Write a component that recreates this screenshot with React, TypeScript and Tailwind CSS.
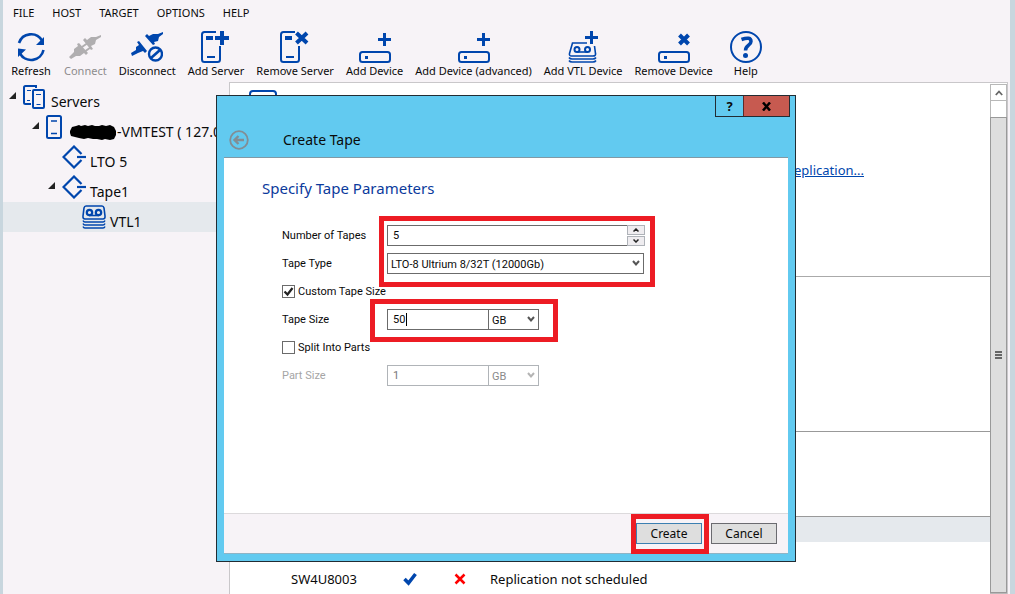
import type { ReactNode } from "react";

const BLUE = "#0046ad";

function ServerGlyph() {
  return (
    <>
      <path d="M16 1H4.500Q2 1 2 3.500V28.500Q2 31 4.500 31H17.500Q20 31 20 28.500V15" strokeWidth="2" />
      <path d="M6 7h7" strokeWidth="4" />
      <path d="M7 26h8" strokeWidth="2" />
    </>
  );
}

function DeviceGlyph() {
  return (
    <>
      <rect x="1" y="21" width="30" height="10" rx="2.500" strokeWidth="2" />
      <path d="M6 26.500h3" strokeWidth="3" />
    </>
  );
}

function Icon({ children, color = BLUE }: { children: ReactNode; color?: string }) {
  return (
    <svg width="32" height="32" viewBox="0 0 32 32" fill="none" stroke={color} aria-hidden="true">
      {children}
    </svg>
  );
}

const tools: { label: string; disabled?: boolean; icon: ReactNode }[] = [
  {
    label: "Refresh",
    icon: (
      <Icon>
        <path d="M4 12A12.700 12.700 0 0 1 27 9.500M28.500 19A12.700 12.700 0 0 1 5 22.500" strokeWidth="2.600" />
        <path d="M29 6v8h-8zM3 26v-8.500l8 1z" fill={BLUE} stroke="none" />
      </Icon>
    ),
  },
  {
    label: "Connect",
    disabled: true,
    icon: (
      <Icon color="#b0aeb0">
        <path
          d="M0 26L5 21V18L9 15 8 13 10 12 19 22 17 24 15 22 11 25H7L2 28zM32 4V6L27 9 26 13 22 15 24 18 22 19 14 9 16 7 18 9 22 6H27z"
          fill="#b0aeb0"
          stroke="none"
        />
        <path d="M13 16l5-3.500M16.500 20l5-3.500" strokeWidth="2" />
      </Icon>
    ),
  },
  {
    label: "Disconnect",
    icon: (
      <Icon>
        <path
          d="M0 22L5 19V16L8 14 6 11 8 10 16 20 14 22 12 20 7 22 1 25zM32 1V3L28 6 27 10 23 11 24 13 22 14 14 5 16 3 18 5 22 3H27z"
          fill={BLUE}
          stroke="none"
        />
        <circle cx="24.500" cy="23" r="6.500" strokeWidth="2.400" />
        <path d="M20 27l9-8" strokeWidth="2.600" />
      </Icon>
    ),
  },
  {
    label: "Add Server",
    icon: (
      <Icon>
        <ServerGlyph />
        <path d="M15 7h14M22 0v14" strokeWidth="4" />
      </Icon>
    ),
  },
  {
    label: "Remove Server",
    icon: (
      <Icon>
        <ServerGlyph />
        <path d="M17.500 2L28 12M28 2L17.500 12" strokeWidth="4" />
      </Icon>
    ),
  },
  {
    label: "Add Device",
    icon: (
      <Icon>
        <DeviceGlyph />
        <path d="M19 8.500h13M25.500 2v13" strokeWidth="3" />
      </Icon>
    ),
  },
  {
    label: "Add Device (advanced)",
    icon: (
      <Icon>
        <DeviceGlyph />
        <path d="M19 8.500h13M25.500 2v13" strokeWidth="3" />
      </Icon>
    ),
  },
  {
    label: "Add VTL Device",
    icon: (
      <Icon>
        <path d="M20 12H5.500L2.500 22.500Q2 25 4.500 25H26Q29 25 28.500 22.500L27.500 15" strokeWidth="1.600" />
        <circle cx="10" cy="18.500" r="2.500" strokeWidth="2" />
        <circle cx="20.500" cy="18.500" r="2.500" strokeWidth="2" />
        <path d="M10 21h10.500" strokeWidth="1.600" />
        <path d="M2 26.500q1 1.500 3 1.500h21q2 0 3-1.500M2 29.500q1 1.500 3 1.500h21q2 0 3-1.500" strokeWidth="1.600" />
        <path d="M18 6.500h13M24.500 0v13" strokeWidth="3" />
      </Icon>
    ),
  },
  {
    label: "Remove Device",
    icon: (
      <Icon>
        <DeviceGlyph />
        <path d="M21.500 4l9 9M30.500 4l-9 9" strokeWidth="4" />
      </Icon>
    ),
  },
  {
    label: "Help",
    icon: (
      <Icon>
        <circle cx="16" cy="16" r="15" strokeWidth="2" />
        <path d="M11.500 8.500Q21 5 21 10.500C21 14.500 15.500 14 15.500 19.500" strokeWidth="3.500" />
        <circle cx="15.500" cy="24.500" r="2.500" fill={BLUE} stroke="none" />
      </Icon>
    ),
  },
];

function TreeArrow() {
  return (
    <svg width="7" height="7" viewBox="0 0 7 7" className="mt-2.5 shrink-0" aria-hidden="true">
      <path d="M7 0v7H0z" fill="#222" />
    </svg>
  );
}

function ServersIcon() {
  return (
    <svg width="24" height="24" viewBox="0 0 24 24" fill="none" stroke={BLUE} strokeWidth="2" aria-hidden="true">
      <path d="M13 3V1H2.500Q1 1 1 2.500V17.500Q1 19 2.500 19H8" />
      <rect x="10" y="5" width="11" height="18" rx="1" />
      <path d="M4 5.500h4M4 15.500h3M13 9.500h5M13.500 19.500h4" strokeWidth="1.200" />
    </svg>
  );
}

function ServerIcon() {
  return (
    <svg width="16" height="24" viewBox="0 0 16 24" fill="none" stroke={BLUE} strokeWidth="2" aria-hidden="true">
      <rect x="1" y="1" width="14" height="22" rx="1.500" />
      <path d="M5 6h6M5 18.500h6" strokeWidth="1.400" />
    </svg>
  );
}

function TargetIcon() {
  return (
    <svg width="24" height="24" viewBox="0 0 24 24" fill="none" stroke={BLUE} strokeWidth="2.200" aria-hidden="true">
      <path d="M19.500 9L12 1.500 1.500 12 12 22.500l7.500-7.500" />
      <path d="M15 12h9" />
    </svg>
  );
}

function TapeIcon() {
  return (
    <svg width="24" height="24" viewBox="0 0 24 24" fill="none" stroke={BLUE} strokeWidth="1.600" aria-hidden="true">
      <path d="M4 1h16q1.500 0 2 2l1 8q.300 3-2 3H3q-2.300 0-2-3l1-8q.500-2 2-2z" />
      <circle cx="7.500" cy="7.500" r="2.700" strokeWidth="2.200" />
      <circle cx="16.500" cy="7.500" r="2.700" strokeWidth="2.200" />
      <path d="M7 10.500h10" />
      <path d="M1 15.500q.500 1.500 2 1.500h18q1.500 0 2-1.500M1 18.500q.500 1.500 2 1.500h18q1.500 0 2-1.500M1 21.500q.500 1.500 2 1.500h18q1.500 0 2-1.500" strokeWidth="1.400" />
    </svg>
  );
}

function Scribble() {
  return (
    <svg width="47" height="17" viewBox="0 0 47 17" aria-label="hidden name">
      <path d="M0 7l2-4 4-1 3-1 2 1 4-1 3 1 4-1 3 1 4 0 3-1 4 1 4-1 4 2 2 4v4l-2 4-4 1-5-1-3 1-5-1-4 0-5-1-4 1-5-1-4-1-4-1-1-3z" fill="#000" />
    </svg>
  );
}

function Chevron({ muted }: { muted?: boolean }) {
  return (
    <svg width="8" height="8" viewBox="0 0 8 8" fill="none" stroke={muted ? "#b4b4b4" : "#555"} strokeWidth="2" className="pointer-events-none absolute top-1.5 right-1" aria-hidden="true">
      <path d="M1 2l3 3.500L7 2" />
    </svg>
  );
}

function TreeRow({ indent, open, icon, selected, children }: { indent: string; open?: boolean; icon: ReactNode; selected?: boolean; children: ReactNode }) {
  return (
    <li className={`flex h-[30px] items-start ${indent} ${selected ? "bg-[#e5e9ed]" : ""}`}>
      <span className="flex w-3.5 shrink-0">{open && <TreeArrow />}</span>
      <span className="mt-[3px] mr-1 shrink-0">{icon}</span>
      <span className="mt-2.5 flex items-center text-[14px] leading-5 whitespace-nowrap">{children}</span>
    </li>
  );
}

const field = "h-[21px] border border-[#6b6b6b] bg-white text-[11px] outline-none";
const mark = "pointer-events-none absolute border-5 border-[#ed1c24]";
const fieldLabel = "w-[105px] pt-[3px]";

function UnitSelect({ label, disabled }: { label: string; disabled?: boolean }) {
  return (
    <div className="relative">
      <select
        aria-label={label}
        disabled={disabled}
        className={`${field} w-[50px] appearance-none border-l-0 pt-[3px] pl-[3px] ${disabled ? "border-[#b0b4b8] text-[#8a8a8a] opacity-100" : ""}`}
      >
        <option>GB</option>
        <option>MB</option>
      </select>
      <Chevron muted={disabled} />
    </div>
  );
}

function CreateTapeDialog() {
  return (
    <div role="dialog" aria-labelledby="dialog-title" className="absolute top-[95px] left-[216px] flex h-[467px] w-[580px] flex-col border border-[#222c33] bg-[#62caf0] px-[7px] pb-[7px]">
      <header className="relative flex h-[61px] shrink-0 items-end pb-[5px] pl-[5px]">
        <button type="button" aria-label="Back" disabled className="mb-0.5">
          <svg width="20" height="20" viewBox="0 0 20 20" fill="none" stroke="#828d94" strokeWidth="1.800" aria-hidden="true">
            <circle cx="10" cy="10" r="8.800" />
            <path d="M15 10H6M9.500 6L5.500 10l4 4" strokeWidth="2.400" />
          </svg>
        </button>
        <h1 id="dialog-title" className="ml-[34px] text-[14px] leading-6">Create Tape</h1>
        <div className="absolute -top-px -right-[2px] flex h-[22px] border border-[#222c33] text-[13px] leading-5 font-bold">
          <button type="button" aria-label="Help" className="w-[27px]">?</button>
          <button type="button" aria-label="Close" className="flex w-[46px] items-center justify-center border-l border-[#5c2b2b] bg-[#c75a50]">
            <svg width="9" height="9" viewBox="0 0 9 9" stroke="#000" strokeWidth="2.500" aria-hidden="true">
              <path d="M1 .500l7 8M8 .500l-7 8" />
            </svg>
          </button>
        </div>
      </header>

      <form className="flex grow flex-col border-t border-[#8199a5] bg-white" onSubmit={(e) => e.preventDefault()}>
        <div className="grow pt-[18px] pl-[38px]">
          <h2 className="text-[15px] leading-6 text-[#0b3a9c]">Specify Tape Parameters</h2>
          <div className="mt-[21px] ml-5 font-[Roboto,sans-serif] text-[11px] [&>div]:flex [&>div]:h-7 [&>div]:items-center">
            <div>
              <label htmlFor="count" className={fieldLabel}>Number of Tapes</label>
              <div className="relative flex">
                <input id="count" defaultValue="5" className={`${field} w-60 border-r-0 px-[5px]`} />
                <div className="flex w-[18px] flex-col justify-between">
                  <button type="button" aria-label="Increase" className="flex h-[10px] items-center justify-center border border-[#aeb2b8] bg-[#efedf0]">
                    <svg width="6" height="4" viewBox="0 0 6 4" fill="none" stroke="#222" strokeWidth="1.500"><path d="M.500 3.500L3 1l2.500 2.500" /></svg>
                  </button>
                  <button type="button" aria-label="Decrease" className="flex h-[10px] items-center justify-center border border-[#aeb2b8] bg-[#efedf0]">
                    <svg width="6" height="4" viewBox="0 0 6 4" fill="none" stroke="#222" strokeWidth="1.500"><path d="M.500 .500L3 3 5.500 .500" /></svg>
                  </button>
                </div>
                <span className={`${mark} -top-[9px] -right-2.5 -bottom-[41px] -left-2`} />
              </div>
            </div>
            <div>
              <label htmlFor="type" className={fieldLabel}>Tape Type</label>
              <div className="relative">
                <select id="type" className={`${field} w-[257px] appearance-none pt-[3px] pl-[3px]`}>
                  <option>LTO-8 Ultrium 8/32T (12000Gb)</option>
                </select>
                <Chevron />
              </div>
            </div>
            <div>
              <label className="flex items-center gap-[3px]">
                <span className="relative flex">
                  <input type="checkbox" defaultChecked className="peer size-[13px] appearance-none border border-[#6b6b6b] bg-white" />
                  <svg viewBox="0 0 13 13" fill="none" stroke="#222" strokeWidth="2.200" className="pointer-events-none absolute inset-0 hidden size-[13px] peer-checked:block" aria-hidden="true">
                    <path d="M2.500 6.500l3 3L10.500 3" />
                  </svg>
                </span>
                <span className="pt-[3px]">Custom Tape Size</span>
              </label>
            </div>
            <div>
              <label htmlFor="size" className={fieldLabel}>Tape Size</label>
              <div className="relative flex">
                <input id="size" defaultValue="50" className={`${field} w-[102px] border-[#2a6496] px-[5px]`} />
                <span className="pointer-events-none absolute top-1 left-[19px] h-[13px] w-px bg-black" />
                <UnitSelect label="Tape size unit" />
                <span className={`${mark} -top-[10px] -right-[19px] -bottom-[12px] -left-[17px]`} />
              </div>
            </div>
            <div>
              <label className="flex items-center gap-[3px]">
                <input type="checkbox" className="size-[13px] appearance-none border border-[#6b6b6b] bg-white" />
                <span className="pt-[3px]">Split Into Parts</span>
              </label>
            </div>
            <div>
              <label htmlFor="part" className={`${fieldLabel} text-[#a5a5a5]`}>Part Size</label>
              <div className="flex">
                <input id="part" defaultValue="1" disabled className={`${field} w-[102px] border-[#b0b4b8] px-[5px] text-[#777]`} />
                <UnitSelect label="Part size unit" disabled />
              </div>
            </div>
          </div>
        </div>
        <footer className="flex h-[41px] shrink-0 items-center justify-end gap-[9px] border-t border-[#dcdadc] border-b border-b-[#8fb4c6] bg-[#f7f3f7] pr-[11px] text-[12px]">
          <div className="relative flex">
            <button type="submit" className="h-[21px] w-[66px] border border-[#3c7fb1] bg-[#dedede] leading-4">Create</button>
            <span className={`${mark} -top-[9px] -right-[7px] -bottom-[10px] -left-[5px]`} />
          </div>
          <button type="button" className="h-[21px] w-[66px] border border-[#6b6b70] bg-[#dedede] leading-4">Cancel</button>
        </footer>
      </form>
    </div>
  );
}

export default function App() {
  return (
    <div className="relative flex h-screen flex-col overflow-hidden border-r-5 border-l-3 border-[#c8d6de] bg-[#f7f3f7] pr-0.5 font-['Noto_Sans',sans-serif] text-[#0a0a0a]">
      <nav className="flex h-[26px] shrink-0 items-center gap-[18px] pl-2.5 text-[11px]">
        {["FILE", "HOST", "TARGET", "OPTIONS", "HELP"].map((m) => (
          <button key={m} type="button">{m}</button>
        ))}
      </nav>
      <div role="toolbar" className="flex h-14 shrink-0 items-start gap-3 pt-[5px] pl-[7px] text-[11px] leading-4">
        {tools.map((t) => (
          <button key={t.label} type="button" disabled={t.disabled} className="flex min-w-[42px] shrink-0 flex-col items-center whitespace-nowrap disabled:text-[#8d8b8d]">
            {t.icon}
            {t.label}
          </button>
        ))}
      </div>

      <div className="flex min-h-0 grow">
        <aside className="w-[226px] shrink-0">
          <ul>
            <TreeRow indent="pl-1.5" open icon={<ServersIcon />}>Servers</TreeRow>
            <TreeRow indent="pl-[29px]" open icon={<ServerIcon />}>
              <span className="ml-1 flex items-center"><Scribble />-VMTEST ( 127.0.0.1 )</span>
            </TreeRow>
            <TreeRow indent="pl-[45px]" icon={<TargetIcon />}>LTO 5</TreeRow>
            <TreeRow indent="pl-[45px]" open icon={<TargetIcon />}>Tape1</TreeRow>
            <TreeRow indent="pl-[65px]" selected icon={<TapeIcon />}>VTL1</TreeRow>
          </ul>
        </aside>
        <main className="flex min-w-0 grow border border-b-0 border-[#c9c7ca] bg-white">
          <div className="flex min-w-0 grow flex-col text-[13px]">
            <section className="h-[194px] shrink-0 border-b border-[#aaa] pt-[7px] pl-[19px]">
              <svg width="28" height="28" viewBox="0 0 28 28" fill="none" stroke={BLUE} strokeWidth="2" aria-hidden="true">
                <rect x="1" y="1" width="26" height="26" rx="3" />
              </svg>
              <div className="mt-[42px] flex w-[615px] justify-end">
                <a href="#replication" className="leading-5 text-[#0046ad] underline">Replication...</a>
              </div>
            </section>
            <section className="h-[155px] shrink-0 border-b border-[#999]" />
            <section className="h-[85px] shrink-0 border-b border-[#999]" />
            <div className="h-[25px] shrink-0 bg-[#e5e9ed]" />
            <div className="flex items-center pt-[27px] pl-[61px] leading-5">
              <span className="w-28">SW4U8003</span>
              <svg width="14" height="14" viewBox="0 0 14 14" fill="none" stroke={BLUE} strokeWidth="3.500" aria-hidden="true">
                <path d="M1.500 7l4 4L12.500 2" />
              </svg>
              <svg width="12" height="12" viewBox="0 0 12 12" stroke="#f00" strokeWidth="2.500" className="ml-[37px]" aria-hidden="true">
                <path d="M1.500 1.500l9 9M10.500 1.500l-9 9" />
              </svg>
              <span className="ml-6">Replication not scheduled</span>
            </div>
          </div>
          <div className="mt-px flex w-[17px] shrink-0 flex-col border border-[#b8b8b8]">
            <button type="button" aria-label="Scroll up" className="flex h-4 shrink-0 items-center justify-center border-b border-[#b8b8b8]">
              <svg width="8" height="6" viewBox="0 0 8 6" fill="none" stroke="#666" strokeWidth="1.800" aria-hidden="true">
                <path d="M.800 5L4 1.500 7.200 5" />
              </svg>
            </button>
            <div className="-mx-px mt-4 flex grow items-center justify-center border border-[#999] bg-[#dedede]">
              <svg width="7" height="8" viewBox="0 0 7 8" stroke="#666" strokeWidth="2" aria-hidden="true">
                <path d="M0 1h7M0 4h7M0 7h7" />
              </svg>
            </div>
          </div>
        </main>
      </div>

      <div className="absolute inset-y-0 -left-[3px]">
        <CreateTapeDialog />
      </div>
    </div>
  );
}
